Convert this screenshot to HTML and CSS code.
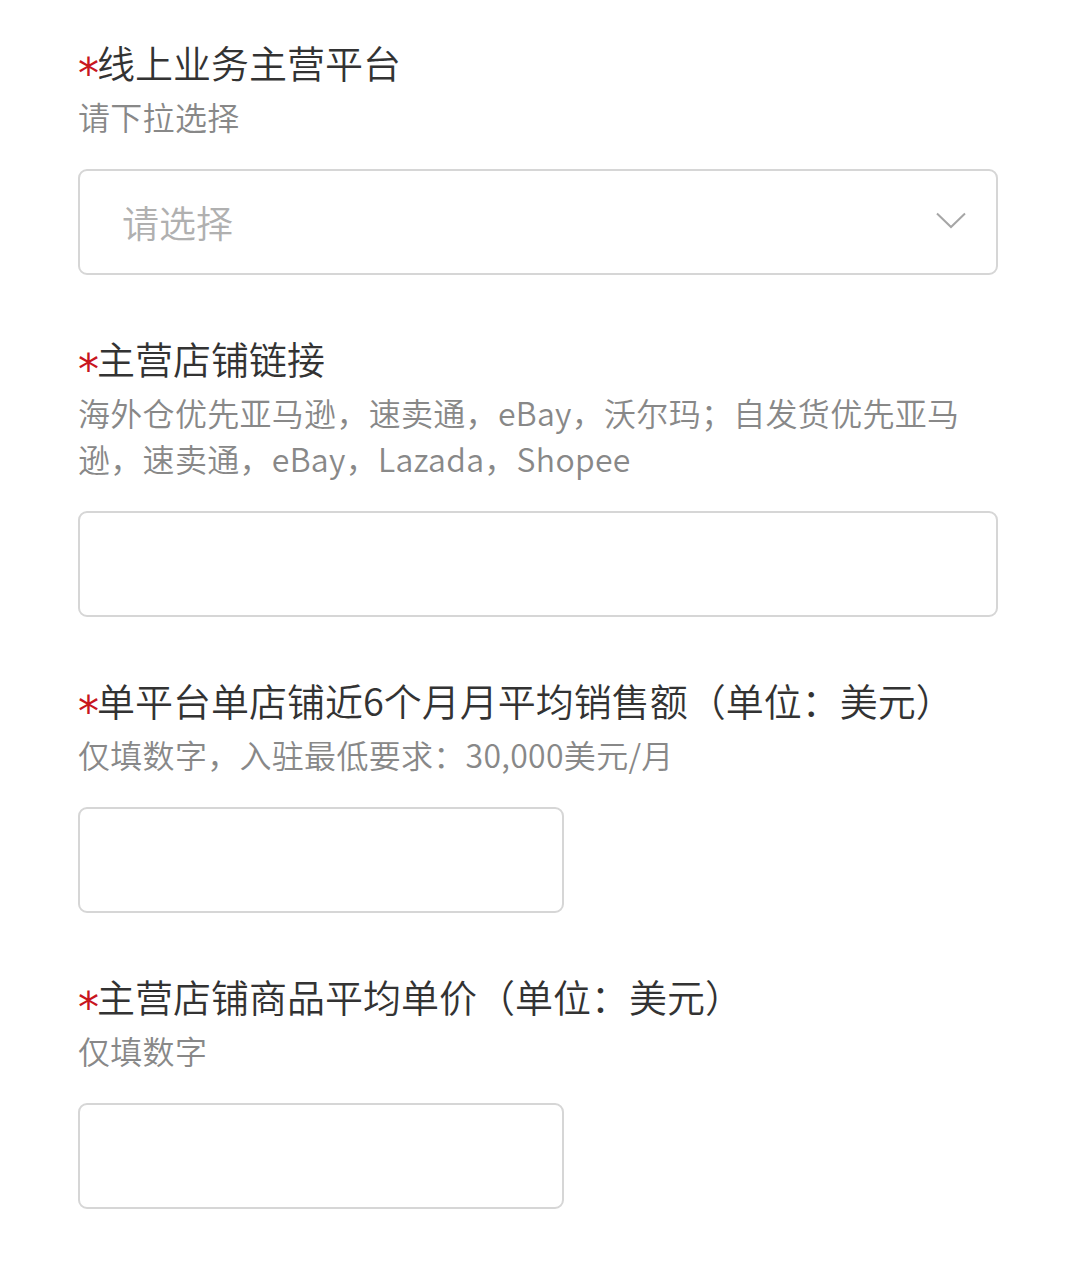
FILE: index.html
```html
<!DOCTYPE html>
<html lang="zh-CN">
<head>
<meta charset="utf-8">
<title>表单</title>
<link rel="stylesheet" href="styles.css">
</head>
<body>
<form class="form">
  <div class="field">
    <div class="label"><span class="req">⁎</span>线上业务主营平台</div>
    <div class="hint">请下拉选择</div>
    <div class="box box-wide select">
      <span class="placeholder">请选择</span>
      <svg class="chevron" width="30" height="17" viewBox="0 0 30 17"><path d="M1 1.5 L15 15 L29 1.5" fill="none" stroke="#a6a6a6" stroke-width="2"/></svg>
    </div>
  </div>
  <div class="field">
    <div class="label"><span class="req">⁎</span>主营店铺链接</div>
    <div class="hint">海外仓优先亚马逊，速卖通，eBay，沃尔玛；自发货优先亚马逊，速卖通，eBay，Lazada，Shopee</div>
    <div class="box box-wide"></div>
  </div>
  <div class="field">
    <div class="label"><span class="req">⁎</span>单平台单店铺近6个月月平均销售额（单位：美元）</div>
    <div class="hint">仅填数字，入驻最低要求：30,000美元/月</div>
    <div class="box box-narrow"></div>
  </div>
  <div class="field">
    <div class="label"><span class="req">⁎</span>主营店铺商品平均单价（单位：美元）</div>
    <div class="hint">仅填数字</div>
    <div class="box box-narrow"></div>
  </div>
</form>
</body>
</html>
```

FILE: styles.css
```css
html, body {
  margin: 0;
  padding: 0;
  background: #ffffff;
}
body {
  font-family: "Noto Sans CJK SC", "Noto Sans", sans-serif;
  width: 1080px;
}
.form {
  display: flex;
  flex-direction: column;
  gap: 57px;
  padding: 36px 0 0 78px;
}
.field {
  display: flex;
  flex-direction: column;
  width: 920px;
}
.label {
  font-size: 38px;
  line-height: 52px;
  font-weight: 350;
  color: #333333;
  white-space: nowrap;
}
.req {
  font-family: "DejaVu Sans", sans-serif;
  font-weight: 400;
  font-size: 42px;
  line-height: 0;
  vertical-align: 3px;
  letter-spacing: -2px;
  color: #c8161e;
}
.hint {
  margin-top: 5px;
  font-size: 32px;
  line-height: 46px;
  font-weight: 350;
  color: #888888;
  letter-spacing: 0.3px;
}
.box {
  margin-top: 30px;
  box-sizing: border-box;
  height: 106px;
  border: 2px solid #d6d6d6;
  border-radius: 9px;
  background: #fff;
}
.box-wide { width: 920px; }
.box-narrow { width: 486px; }
.select {
  display: flex;
  align-items: center;
  justify-content: space-between;
  padding: 0 30px 0 42px;
}
.placeholder {
  font-size: 37px;
  font-weight: 350;
  color: #b0b0b0;
  line-height: 50px;
}
.chevron {
  display: block;
  margin-top: -4px;
}
```
